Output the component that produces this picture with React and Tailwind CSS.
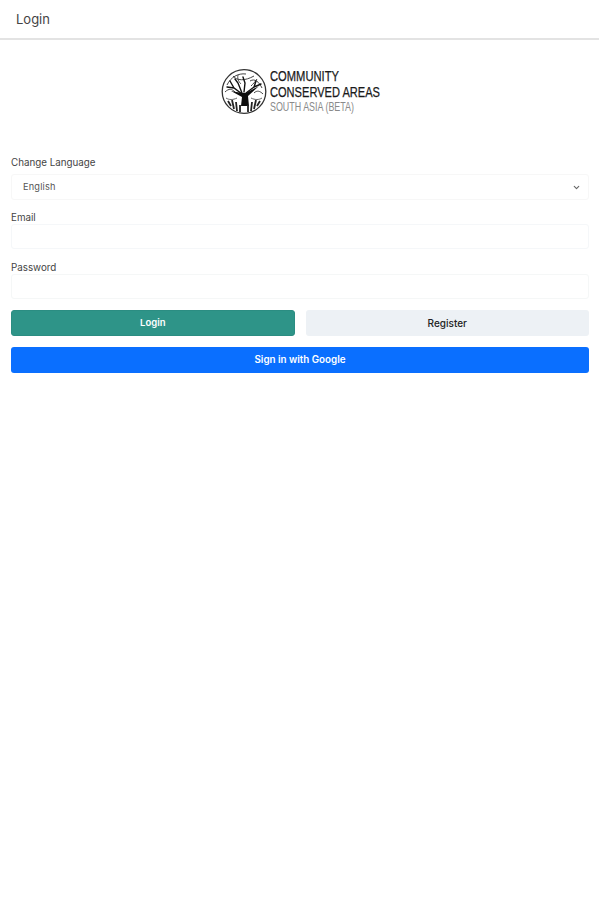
import React from 'react';
import { ChevronDown } from 'lucide-react';

const font = { fontFamily: 'Inter, "Noto Sans", sans-serif' };

function TreeLogo() {
  return (
    <svg width="46" height="47" viewBox="0 0 46 47" fill="none" className="shrink-0">
      <circle cx="23" cy="23.5" r="21.8" stroke="#333" strokeWidth="1.3" />
      {/* canopy twigs */}
      <path d="M6 17 C10 9 17 5 25 6 M12 8 C16 13 24 13 33 8 M29 13 C34 10 38 14 41 20 M4 24 C8 20 11 21 14 24 M33 25 C36 22 39 23 42 26 M17 7 C16 11 18 14 20 16 M36 11 C34 14 32 16 30 18" stroke="#444" strokeWidth="1" />
      {/* branches */}
      <path d="M21 26 L13 20 L6 19 M13 20 L9 13 M21 25 L17 15 L14 11 M23 24 L24 15 L22 9 M25 25 L33 19 L40 16 M33 19 L35 13" stroke="#111" strokeWidth="1.4" strokeLinecap="round" />
      {/* trunk */}
      <path d="M20 38 L21 29 L10 23 L21 25 L25 25 L38 18 L27 28 L28 38 Z" fill="#0d0d0d" />
      {/* roots */}
      <path d="M7 33 L10 38 M11 32 L13 41 M15 34 L16 43 M19 37 L19 44 M27 37 L27 44 M31 34 L30 43 M35 32 L33 41 M39 33 L36 38" stroke="#222" strokeWidth="1.8" />
      <path d="M5 30 C8 32 12 32 16 30 M30 30 C34 32 38 32 41 30" stroke="#555" strokeWidth="0.9" />
    </svg>
  );
}

function Logo() {
  return (
    <div className="flex items-center gap-[3px] pl-[7px]">
      <TreeLogo />
      <svg width="116" height="47" viewBox="0 0 116 47" className="shrink-0">
        <g fontFamily="'Liberation Sans', sans-serif" fontSize="14">
          <text x="0" y="13" fill="#1a1a1a" stroke="#1a1a1a" strokeWidth="0.25" textLength="69" lengthAdjust="spacingAndGlyphs">COMMUNITY</text>
          <text x="0" y="29" fill="#1a1a1a" stroke="#1a1a1a" strokeWidth="0.25" textLength="110" lengthAdjust="spacingAndGlyphs">CONSERVED AREAS</text>
          <text x="0" y="43" fill="#8a8a8a" fontSize="12" textLength="84" lengthAdjust="spacingAndGlyphs">SOUTH ASIA (BETA)</text>
        </g>
      </svg>
    </div>
  );
}

function Field({ label, children }) {
  return (
    <div>
      <label className="block text-[9.8px] leading-[12px] text-[#444]">{label}</label>
      {children}
    </div>
  );
}

export default function App() {
  return (
    <div className="min-h-[900px] bg-white" style={font}>
      <header className="h-[40px] pl-4 pt-px flex items-center border-b-2 border-[#e3e3e3]">
        <h1 className="text-[13px] text-[#444]">Login</h1>
      </header>

      <main className="pl-[11px] pr-[10px]">
        <div className="flex justify-center pt-[28px] pb-[42px]">
          <Logo />
        </div>

        <Field label="Change Language">
          <div className="mt-[5px] h-[26px] rounded-[3px] border border-[#f7f7f7] pl-[11px] pr-[7px] flex items-center justify-between">
            <span className="text-[9.2px] tracking-[0.2px] text-[#555]">English</span>
            <ChevronDown size={9} strokeWidth={3} className="text-[#666]" />
          </div>
        </Field>

        <div className="mt-[12px]">
          <Field label="Email">
            <div className="h-[25px] rounded-[3px] border border-[#f5f7f9]" />
          </Field>
        </div>

        <div className="mt-[13px]">
          <Field label="Password">
            <div className="h-[25px] rounded-[3px] border border-[#f5f7f7]" />
          </Field>
        </div>

        <div className="mt-[11px] grid grid-cols-2 gap-[11px]">
          <button className="h-[26px] rounded-[3px] bg-[#2e9488] border border-[#2b8d82] text-white text-[9.5px] font-semibold">
            Login
          </button>
          <button className="h-[26px] rounded-[3px] bg-[#edf1f5] text-[#222] text-[10px] font-medium">
            Register
          </button>
        </div>

        <button className="mt-[11px] h-[26px] w-full rounded-[3px] bg-[#0a6fff] text-white text-[9.8px] font-semibold">
          Sign in with Google
        </button>
      </main>
    </div>
  );
}
